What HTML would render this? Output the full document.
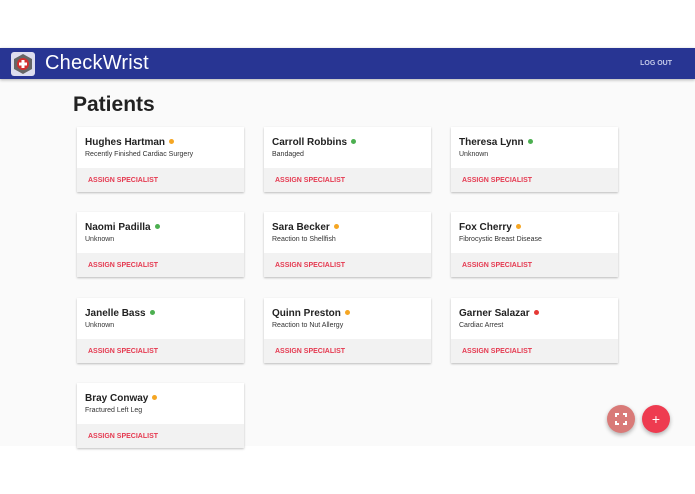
<!DOCTYPE html>
<html><head><style>
body{margin:0;width:695px;height:494px;background:#fff;font-family:"Liberation Sans",sans-serif;position:relative;overflow:hidden}
.nav{position:absolute;top:48px;left:0;width:695px;height:31px;background:#283593;box-shadow:0 1px 3px rgba(0,0,0,.3)}
.logo{position:absolute;left:11px;top:4px;width:24px;height:24px;background:#dde;border-radius:3px}
.title{position:absolute;left:45px;top:4px;color:#fff;font-size:20px;letter-spacing:.2px}
.lo{position:absolute;right:23px;top:12px;color:#c5cae9;font-size:7px;font-weight:bold}
.main{position:absolute;top:79px;left:0;width:695px;height:367px;background:#fafafa}
h1{position:absolute;left:73px;top:93px;margin:0;font-size:21px;color:#222;font-weight:bold}
.card{position:absolute;width:167px;height:65px;background:#fff;box-shadow:0 1px 2px rgba(0,0,0,.25)}
.card .n{position:absolute;left:8px;top:10px;font-size:10px;font-weight:bold;color:#222}
.card .s{position:absolute;left:8px;top:24px;font-size:7px;color:#333}
.card .f{position:absolute;left:0;top:41px;width:167px;height:24px;background:#f2f2f2}
.card .f span{position:absolute;left:11px;top:9px;font-size:7px;font-weight:bold;color:#e53950}
.d{display:inline-block;width:5px;height:5px;border-radius:50%;margin-left:4px;vertical-align:1px}
.o{background:#f5a623}.g{background:#4caf50}.r{background:#e53935}
.fab{position:absolute;width:28px;height:28px;border-radius:50%;box-shadow:0 2px 4px rgba(0,0,0,.3);color:#fff;text-align:center;line-height:28px;font-size:14px}
</style></head><body>
<div class="main"></div>
<div class="nav"><div class="logo"><svg width="24" height="24"><polygon points="12,2 21,7 21,17 12,22 3,17 3,7" fill="#666"/><circle cx="12" cy="12" r="6" fill="#d32f2f"/><rect x="10.5" y="8" width="3" height="8" fill="#fff"/><rect x="8" y="10.5" width="8" height="3" fill="#fff"/></svg></div><div class="title">CheckWrist</div><div class="lo">LOG OUT</div></div>
<h1>Patients</h1>
<div class="card" style="left:77px;top:127px"><div class="n">Hughes Hartman<span class="d o"></span></div><div class="s">Recently Finished Cardiac Surgery</div><div class="f"><span>ASSIGN SPECIALIST</span></div></div>
<div class="card" style="left:264px;top:127px"><div class="n">Carroll Robbins<span class="d g"></span></div><div class="s">Bandaged</div><div class="f"><span>ASSIGN SPECIALIST</span></div></div>
<div class="card" style="left:451px;top:127px"><div class="n">Theresa Lynn<span class="d g"></span></div><div class="s">Unknown</div><div class="f"><span>ASSIGN SPECIALIST</span></div></div>
<div class="card" style="left:77px;top:212px"><div class="n">Naomi Padilla<span class="d g"></span></div><div class="s">Unknown</div><div class="f"><span>ASSIGN SPECIALIST</span></div></div>
<div class="card" style="left:264px;top:212px"><div class="n">Sara Becker<span class="d o"></span></div><div class="s">Reaction to Shellfish</div><div class="f"><span>ASSIGN SPECIALIST</span></div></div>
<div class="card" style="left:451px;top:212px"><div class="n">Fox Cherry<span class="d o"></span></div><div class="s">Fibrocystic Breast Disease</div><div class="f"><span>ASSIGN SPECIALIST</span></div></div>
<div class="card" style="left:77px;top:298px"><div class="n">Janelle Bass<span class="d g"></span></div><div class="s">Unknown</div><div class="f"><span>ASSIGN SPECIALIST</span></div></div>
<div class="card" style="left:264px;top:298px"><div class="n">Quinn Preston<span class="d o"></span></div><div class="s">Reaction to Nut Allergy</div><div class="f"><span>ASSIGN SPECIALIST</span></div></div>
<div class="card" style="left:451px;top:298px"><div class="n">Garner Salazar<span class="d r"></span></div><div class="s">Cardiac Arrest</div><div class="f"><span>ASSIGN SPECIALIST</span></div></div>
<div class="card" style="left:77px;top:383px"><div class="n">Bray Conway<span class="d o"></span></div><div class="s">Fractured Left Leg</div><div class="f"><span>ASSIGN SPECIALIST</span></div></div>
<div class="fab" style="left:607px;top:405px;background:#d97a78"><svg width="12" height="12" style="margin-top:8px"><path d="M1 4V1H4M8 1H11V4M11 8V11H8M4 11H1V8" stroke="#fff" stroke-width="2" fill="none"/></svg></div>
<div class="fab" style="left:642px;top:405px;background:#ee3b50">+</div>
</body></html>
